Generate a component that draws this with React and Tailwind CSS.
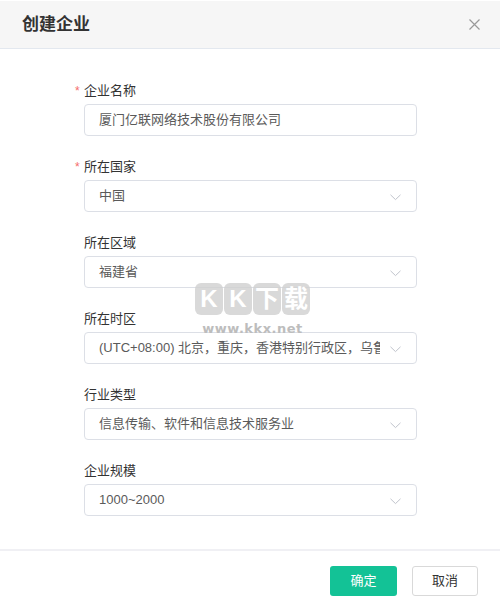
import React from 'react'

const fields = [
  { label: '企业名称', value: '厦门亿联网络技术股份有限公司', required: true, select: false },
  { label: '所在国家', value: '中国', required: true, select: true },
  { label: '所在区域', value: '福建省', select: true },
  { label: '所在时区', value: '(UTC+08:00) 北京，重庆，香港特别行政区，乌鲁木齐', select: true },
  { label: '行业类型', value: '信息传输、软件和信息技术服务业', select: true },
  { label: '企业规模', value: '1000~2000', select: true },
]

function Chevron() {
  return (
    <svg width="11" height="7" viewBox="0 0 11 7" fill="none" className="absolute right-[15px] top-[13px]">
      <path d="M0.5 0.8 L5.5 5.6 L10.5 0.8" stroke="#c0c4cc" strokeWidth="1" />
    </svg>
  )
}

function Field({ label, value, required, select }) {
  return (
    <div className="flex flex-col">
      <div className="flex items-center h-[20px] mb-[3px] text-[13px] text-[#333]">
        {required && <span className="-ml-[9px] w-[9px] text-[#f56c6c] text-[12px]">*</span>}
        <span>{label}</span>
      </div>
      <div className="relative h-[32px] border border-[#dcdfe6] rounded-[4px] bg-white flex items-center">
        <div className="ml-[14px] mr-[36px] flex-1 overflow-hidden whitespace-nowrap text-[13px] text-[#5a5a5a]">
          {value}
        </div>
        {select && <Chevron />}
      </div>
    </div>
  )
}

export default function App() {
  return (
    <div
      className="relative w-[500px] h-[610px] bg-white overflow-hidden flex flex-col"
      style={{ fontFamily: '"Liberation Sans", "Noto Sans CJK SC", sans-serif' }}
    >
      <div className="mt-[1px] h-[48px] bg-[#f6f6f6] border-b border-[#e3e8ef] flex items-center justify-between pl-[22px] pr-[20px]">
        <span className="text-[17px] font-bold text-[#333]">创建企业</span>
        <svg width="11" height="11" viewBox="0 0 11 11" fill="none">
          <path d="M0.5 0.5 L10.5 10.5 M10.5 0.5 L0.5 10.5" stroke="#999" strokeWidth="1.2" />
        </svg>
      </div>

      <div className="pt-[32px] pb-[33px] pl-[84px]">
        <div className="w-[333px] flex flex-col gap-[21px]">
          {fields.map(f => <Field key={f.label} {...f} />)}
        </div>
      </div>

      <div className="h-[2px] bg-[#f0f0f4]" />

      <div className="flex justify-end gap-[15px] pt-[15px] pr-[22px]">
        <button className="w-[67px] h-[30px] rounded-[3px] bg-[#13c296] text-white text-[13px]">确定</button>
        <button className="w-[66px] h-[30px] rounded-[3px] border border-[#d9d9d9] bg-white text-[#333] text-[13px]">取消</button>
      </div>

      {/* watermark */}
      <div className="absolute left-[195px] top-[283px] flex flex-col items-center pointer-events-none">
        <div className="flex gap-[1px]">
          {['K', 'K', '下', '载'].map((c, i) => (
            <span key={i} className="w-[28px] h-[32px] flex items-center justify-center bg-[#cfcfcf]/80 rounded-[6px] text-white text-[24px] font-bold">
              {c}
            </span>
          ))}
        </div>
        <span className="mt-[4px] text-[13px] font-bold text-[#bdbdbd] tracking-[0.5px]" style={{ fontFamily: '"DejaVu Sans", sans-serif' }}>
          www.kkx.net
        </span>
      </div>
    </div>
  )
}
